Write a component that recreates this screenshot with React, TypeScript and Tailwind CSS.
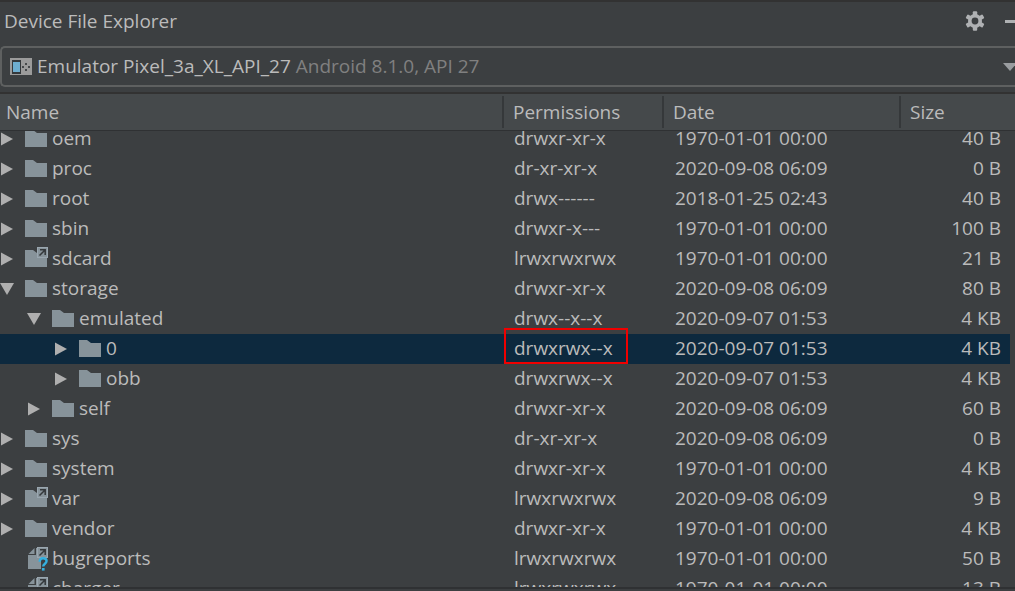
import { useState } from "react";

type Kind = "folder" | "folder-link" | "file-link";

interface Entry {
  name: string;
  kind: Kind;
  depth: number;
  open?: boolean;
  permissions: string;
  date: string;
  size: string;
  marked?: boolean;
}

const entries: Entry[] = [
  { name: "oem", kind: "folder", depth: 0, permissions: "drwxr-xr-x", date: "1970-01-01 00:00", size: "40 B" },
  { name: "proc", kind: "folder", depth: 0, permissions: "dr-xr-xr-x", date: "2020-09-08 06:09", size: "0 B" },
  { name: "root", kind: "folder", depth: 0, permissions: "drwx------", date: "2018-01-25 02:43", size: "40 B" },
  { name: "sbin", kind: "folder", depth: 0, permissions: "drwxr-x---", date: "1970-01-01 00:00", size: "100 B" },
  { name: "sdcard", kind: "folder-link", depth: 0, permissions: "lrwxrwxrwx", date: "1970-01-01 00:00", size: "21 B" },
  { name: "storage", kind: "folder", depth: 0, open: true, permissions: "drwxr-xr-x", date: "2020-09-08 06:09", size: "80 B" },
  { name: "emulated", kind: "folder", depth: 1, open: true, permissions: "drwx--x--x", date: "2020-09-07 01:53", size: "4 KB" },
  { name: "0", kind: "folder", depth: 2, permissions: "drwxrwx--x", date: "2020-09-07 01:53", size: "4 KB", marked: true },
  { name: "obb", kind: "folder", depth: 2, permissions: "drwxrwx--x", date: "2020-09-07 01:53", size: "4 KB" },
  { name: "self", kind: "folder", depth: 1, permissions: "drwxr-xr-x", date: "2020-09-08 06:09", size: "60 B" },
  { name: "sys", kind: "folder", depth: 0, permissions: "dr-xr-xr-x", date: "2020-09-08 06:09", size: "0 B" },
  { name: "system", kind: "folder", depth: 0, permissions: "drwxr-xr-x", date: "1970-01-01 00:00", size: "4 KB" },
  { name: "var", kind: "folder-link", depth: 0, permissions: "lrwxrwxrwx", date: "2020-09-08 06:09", size: "9 B" },
  { name: "vendor", kind: "folder", depth: 0, permissions: "drwxr-xr-x", date: "1970-01-01 00:00", size: "4 KB" },
  { name: "bugreports", kind: "file-link", depth: 0, permissions: "lrwxrwxrwx", date: "1970-01-01 00:00", size: "50 B" },
  { name: "charger", kind: "file-link", depth: 0, permissions: "lrwxrwxrwx", date: "1970-01-01 00:00", size: "13 B" },
];

const indents = ["pl-0", "pl-[27px]", "pl-[54px]"];

function LinkBadge() {
  return (
    <>
      <path d="M13 0h11v11H13z" fill="#9aa7b0" />
      <path d="M14 1h9v9h-9z" fill="#87939a" />
      <path d="M16 2.800H21.200V8M21 3L15.500 8.500" fill="none" stroke="#34383b" strokeWidth="1.500" />
    </>
  );
}

function EntryIcon({ kind }: { kind: Kind }) {
  if (kind === "file-link") {
    return (
      <svg width="24" height="24" viewBox="0 0 24 24" aria-hidden="true" className="shrink-0">
        <path d="M10.500 1v6H4.500z" fill="#87939a" />
        <path d="M4 8h8V1h1v11h4v10H4z" fill="#87939a" />
        <LinkBadge />
        <path d="M4 11h12v11H4z" fill="#87939a" />
        <path
          d="M15.700 14.800c0-2.600 1.700-3.500 3.400-3.500 2 0 3.500 1 3.500 2.800 0 2.600-3.400 2.600-3.400 5.400"
          fill="none"
          stroke="#34b0e0"
          strokeWidth="2.400"
        />
        <path d="M17.900 21h2.700v2.600h-2.700z" fill="#34b0e0" />
      </svg>
    );
  }
  return (
    <svg width="24" height="24" viewBox="0 0 24 24" aria-hidden="true" className="shrink-0">
      <path d="M1 3h8l4 3h10v14H1z" fill="#87939a" />
      {kind === "folder-link" && <LinkBadge />}
    </svg>
  );
}

function Toggle({ open, name }: { open: boolean; name: string }) {
  return (
    <button type="button" aria-label={open ? `Collapse ${name}` : `Expand ${name}`} className="shrink-0">
      <svg width="14" height="14" viewBox="0 0 14 14" aria-hidden="true">
        <path d={open ? "M0 1h14L7 13z" : "M1 0.500v13L13 7z"} fill="#afafaf" />
      </svg>
    </button>
  );
}

function DeviceIcon() {
  return (
    <svg width="22" height="17" viewBox="0 0 22 17" aria-hidden="true" className="shrink-0">
      <path d="M0 0h22v17H0z" fill="#9b9b9b" />
      <path d="M2 2h9v14H2z" fill="#34383b" />
      <path d="M3 4h7v10H3z" fill="#6eaed0" />
      <path d="M15 5h2v2h-2zM15 11h2v2h-2zM12 8h2v2h-2zM18 8h2v2h-2z" fill="#46494b" />
    </svg>
  );
}

function GearIcon() {
  return (
    <svg width="20" height="20" viewBox="-10 -10 20 20" aria-hidden="true">
      <g fill="#afb1b3">
        <circle r="7" />
        <rect x="-2.200" y="-9.700" width="4.400" height="19.400" rx="1" />
        <rect x="-2.200" y="-9.700" width="4.400" height="19.400" rx="1" transform="rotate(60)" />
        <rect x="-2.200" y="-9.700" width="4.400" height="19.400" rx="1" transform="rotate(120)" />
      </g>
      <circle r="3.400" fill="#3c3f41" />
    </svg>
  );
}

export default function App() {
  const [selected, setSelected] = useState("0");
  const columns = ["Permissions", "Date", "Size"];

  return (
    <main className="flex h-screen flex-col overflow-hidden border-t-2 border-[#323232] bg-[#3c3f41] font-['Open_Sans','Noto_Sans',sans-serif] text-[19px] leading-7 text-[#bbbbbb]">
      <header className="flex h-11 shrink-0 items-center justify-between pb-1.5 pl-1">
        <h1>Device File Explorer</h1>
        <div className="flex items-center gap-5">
          <button type="button" aria-label="Settings">
            <GearIcon />
          </button>
          <button type="button" aria-label="Hide" className="h-[3px] w-[10px] bg-[#afb1b3]" />
        </div>
      </header>

      <div className="flex h-[41px] shrink-0 items-center rounded-l-[5px] border-2 border-r-0 border-[#5e6060] pl-2">
        <DeviceIcon />
        <select
          aria-label="Device"
          className="mx-[5px] field-sizing-content appearance-none bg-transparent pb-0.5"
        >
          <option>Emulator Pixel_3a_XL_API_27</option>
        </select>
        <span className="pb-0.5 text-[#808080]">Android 8.1.0, API 27</span>
        <svg width="12" height="8" viewBox="0 0 12 8" aria-hidden="true" className="ml-auto">
          <path d="M0 0h14L7 8z" fill="#9a9da0" />
        </svg>
      </div>

      <table className="mt-[5px] flex min-h-0 grow flex-col border-t-2 border-[#323232]">
        <thead className="block shrink-0 border-b border-[#2f3133] bg-[#45494b]">
          <tr className="grid h-9 grid-cols-[minmax(0,1fr)_160px_237px_116px] py-0.5 text-left">
            <th className="pl-[6px] font-normal leading-8">Name</th>
            {columns.map((column) => (
              <th key={column} className="border-l-2 border-[#35383a] pl-[9px] font-normal leading-8">
                {column}
              </th>
            ))}
          </tr>
        </thead>
        <tbody className="block min-h-0 grow overflow-hidden">
          {entries.map((entry) => (
            <tr
              key={entry.name}
              aria-selected={entry.name === selected}
              onClick={() => setSelected(entry.name)}
              className="mr-[5px] grid h-[30px] grid-cols-[minmax(0,1fr)_160px_237px_111px] first:-mt-[7px] aria-selected:bg-[#0d293e]"
            >
              <td className={indents[entry.depth]}>
                <div className="flex h-[30px] items-center">
                  {entry.kind === "file-link" ? (
                    <span className="w-[14px] shrink-0" />
                  ) : (
                    <Toggle open={entry.open ?? false} name={entry.name} />
                  )}
                  <span className="ml-[10px] mr-1 flex">
                    <EntryIcon kind={entry.kind} />
                  </span>
                  <span className="pb-0.5">{entry.name}</span>
                </div>
              </td>
              <td className="relative pl-3">
                {entry.permissions}
                {entry.marked && (
                  <span className="absolute -top-1.5 left-[2px] h-9 w-[124px] border-2 border-[#f00000]" />
                )}
              </td>
              <td className="pl-[13px]">{entry.date}</td>
              <td className="pr-[9px] text-right">{entry.size}</td>
            </tr>
          ))}
        </tbody>
      </table>
      <footer className="h-1 shrink-0 border-t-2 border-[#2f3133] bg-[#3c3f41]" />
    </main>
  );
}
